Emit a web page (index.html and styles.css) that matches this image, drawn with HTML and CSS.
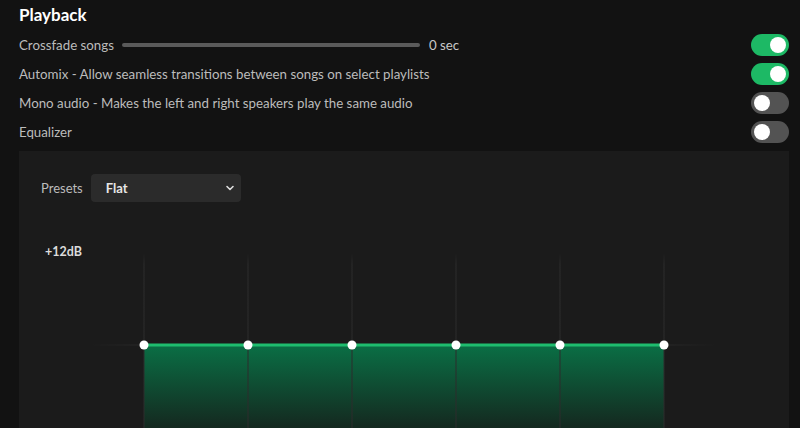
FILE: index.html
```html
<!DOCTYPE html>
<html lang="en">
<head>
  <meta charset="UTF-8" />
  <title>Playback settings</title>
  <link rel="stylesheet" href="styles.css">
</head>
<body>
  <div class="page">
    <h2 class="title">Playback</h2>

    <div class="row">
      <div class="label crossfade">
        <span>Crossfade songs</span>
        <div class="slider"></div>
        <span class="value">0 sec</span>
      </div>
      <div class="toggle on"><span class="knob"></span></div>
    </div>

    <div class="row">
      <span class="label">Automix - Allow seamless transitions between songs on select playlists</span>
      <div class="toggle on"><span class="knob"></span></div>
    </div>

    <div class="row">
      <span class="label">Mono audio - Makes the left and right speakers play the same audio</span>
      <div class="toggle"><span class="knob"></span></div>
    </div>

    <div class="row">
      <span class="label">Equalizer</span>
      <div class="toggle"><span class="knob"></span></div>
    </div>

    <div class="eq-panel">
      <div class="presets">
        <span class="presets-label">Presets</span>
        <div class="select">
          <span>Flat</span>
          <svg width="10" height="10" viewBox="0 0 10 10"><path d="M2 3.5 L5 6.5 L8 3.5" fill="none" stroke="#ddd" stroke-width="1.6" stroke-linecap="round" stroke-linejoin="round"/></svg>
        </div>
      </div>

      <div class="chart">
        <span class="db">+12dB</span>
        <svg class="graph" width="770" height="200" viewBox="0 0 770 200">
          <defs>
            <linearGradient id="vline" x1="0" y1="0" x2="0" y2="1">
              <stop offset="0" stop-color="#2c2c2c" stop-opacity="0"/>
              <stop offset="0.06" stop-color="#2c2c2c"/>
              <stop offset="1" stop-color="#2c2c2c"/>
            </linearGradient>
            <linearGradient id="hline" x1="0" y1="0" x2="1" y2="0">
              <stop offset="0" stop-color="#2c2c2c" stop-opacity="0"/>
              <stop offset="0.1" stop-color="#2c2c2c"/>
              <stop offset="0.9" stop-color="#2c2c2c"/>
              <stop offset="1" stop-color="#2c2c2c" stop-opacity="0"/>
            </linearGradient>
            <linearGradient id="fill" x1="0" y1="0" x2="0" y2="1">
              <stop offset="0" stop-color="#0a6f45"/>
              <stop offset="0.85" stop-color="#142a20"/>
            </linearGradient>
          </defs>
          <rect x="71" y="104.5" width="626" height="1" fill="url(#hline)"/>
          <rect x="125" y="105" width="520" height="95" fill="url(#fill)"/>
          <rect x="124.5" y="13" width="1" height="187" fill="url(#vline)"/>
          <rect x="228.5" y="13" width="1" height="187" fill="url(#vline)"/>
          <rect x="332.5" y="13" width="1" height="187" fill="url(#vline)"/>
          <rect x="436.5" y="13" width="1" height="187" fill="url(#vline)"/>
          <rect x="540.5" y="13" width="1" height="187" fill="url(#vline)"/>
          <rect x="644.5" y="13" width="1" height="187" fill="url(#vline)"/>
          <rect x="125" y="103.5" width="520" height="3" fill="#1ebd6e"/>
          <circle cx="125" cy="105" r="4.5" fill="#fff"/>
          <circle cx="229" cy="105" r="4.5" fill="#fff"/>
          <circle cx="333" cy="105" r="4.5" fill="#fff"/>
          <circle cx="437" cy="105" r="4.5" fill="#fff"/>
          <circle cx="541" cy="105" r="4.5" fill="#fff"/>
          <circle cx="645" cy="105" r="4.5" fill="#fff"/>
        </svg>
      </div>
    </div>
  </div>
</body>
</html>
```

FILE: styles.css
```css
:root {
  --bg-color: #121212;
  --panel-bg: #1b1b1b;
  --text-color: #bcbcbc;
  --green: #1db965;
  --off: #535353;
}

body {
  background: var(--bg-color);
  color: var(--text-color);
  font-family: Lato, "Liberation Sans", sans-serif;
  margin: 0;
}

.page {
  padding: 0 11px 0 19px;
}

.title {
  margin: 0;
  color: #fff;
  font-size: 17px;
  font-weight: 700;
  line-height: 30px;
}

.row {
  display: flex;
  align-items: center;
  justify-content: space-between;
  height: 29px;
  font-size: 13.3px;
}

.crossfade {
  display: flex;
  align-items: center;
}

.slider {
  width: 298px;
  height: 4px;
  border-radius: 2px;
  background: #5a5a5a;
  margin: 0 9px 0 8px;
}

.value {
  color: #c8c8c8;
}

.toggle {
  width: 38px;
  height: 22px;
  border-radius: 11px;
  background: var(--off);
  display: flex;
  align-items: center;
  padding: 0 3px;
  box-sizing: border-box;
}

.toggle.on {
  background: var(--green);
  justify-content: flex-end;
}

.knob {
  width: 16px;
  height: 16px;
  border-radius: 50%;
  background: #fff;
}

.eq-panel {
  margin-top: 5px;
  background: var(--panel-bg);
  height: 277px;
  overflow: hidden;
}

.presets {
  display: flex;
  align-items: center;
  gap: 8px;
  padding: 23px 0 0 22px;
  font-size: 13px;
}

.select {
  width: 150px;
  height: 28px;
  box-sizing: border-box;
  background: #2b2b2b;
  border-radius: 4px;
  color: #e6e6e6;
  font-weight: 700;
  display: flex;
  align-items: center;
  justify-content: space-between;
  padding: 0 6px 0 15px;
}

.chart {
  position: relative;
  margin-top: 38px;
}

.db {
  position: absolute;
  left: 26px;
  top: 4px;
  color: #dcdcdc;
  font-size: 12.5px;
  font-weight: 700;
}

.graph {
  display: block;
}
```
